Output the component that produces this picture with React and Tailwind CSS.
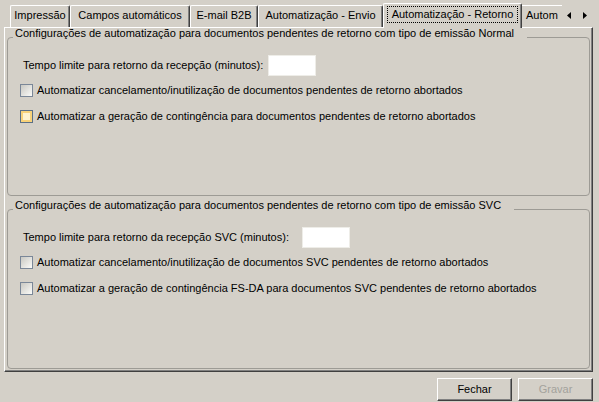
import React from 'react';

const tabs = [
  { id: 'impressao', label: 'Impressão', w: 'w-[60px]' },
  { id: 'campos', label: 'Campos automáticos', w: 'w-[120px]' },
  { id: 'email', label: 'E-mail B2B', w: 'w-[68px]' },
  { id: 'envio', label: 'Automatização - Envio', w: 'w-[125px]' },
];

const Checkbox = ({ hover }) => (
  <div
    className={`w-[13px] h-[13px] shrink-0 border ${
      hover
        ? 'border-[#5b6f86] bg-[#fff3cf] shadow-[inset_0_0_0_2px_#f8d27a]'
        : 'border-[#7a8798] bg-gradient-to-br from-[#c9c8c2] to-[#fbfbf9]'
    }`}
  />
);

const GroupBox = ({ title, className, children }) => (
  <fieldset className={`mx-[2px] border border-[#9d9b95] rounded-[4px] min-w-0 ${className}`}>
    <legend className="ml-[5px] pl-[2px] pr-[13px] pb-[8px] leading-[11px] whitespace-nowrap">
      {title}
    </legend>
    {children}
  </fieldset>
);

const TimeRow = ({ label, labelW }) => (
  <div className="mt-[7px] h-[22px] flex items-center pl-[15px]">
    <span className={`${labelW} whitespace-nowrap`}>{label}</span>
    <div className="w-[48px] h-[21px] bg-white border border-[#eeede8]" />
  </div>
);

const CheckRow = ({ label, hover, first }) => (
  <div className={`${first ? 'mt-[8px]' : 'mt-[13px]'} h-[13px] flex items-center gap-[4px] pl-[12px]`}>
    <Checkbox hover={hover} />
    <span className="whitespace-nowrap leading-[13px]">{label}</span>
  </div>
);

const Button = ({ label, disabled }) => (
  <button
    className={`w-[75px] h-[23px] border border-white border-r-[#404040] border-b-[#404040] shadow-[inset_-1px_-1px_0_#808080] bg-[#d4d0c8] flex items-center justify-center leading-[13px] ${
      disabled ? 'text-[#a3a29c]' : 'text-black'
    }`}
  >
    {label}
  </button>
);

export default function App() {
  return (
    <div className="w-[599px] h-[402px] overflow-hidden bg-[#d4d0c8] font-['Liberation_Sans',Arial,sans-serif] text-[11px] text-black select-none">
      {/* Tab strip */}
      <div className="h-[27px] pt-[3px] pl-[10px] flex items-end">
        {tabs.map((t) => (
          <div
            key={t.id}
            className={`${t.w} h-[22px] shrink-0 flex items-start justify-center pt-[3px] leading-[13px] whitespace-nowrap border-t border-l border-r border-white border-r-[#404040] shadow-[inset_-1px_0_0_#808080] rounded-t-[2px]`}
          >
            {t.label}
          </div>
        ))}
        <div className="relative z-10 -mb-px w-[139px] h-[25px] shrink-0 flex items-start justify-center pt-[2px] bg-[#d4d0c8] border-t border-l border-r border-white border-r-[#404040] shadow-[inset_-1px_0_0_#808080] rounded-t-[2px]">
          <span className="border border-dotted border-black px-[4px] py-[1px] leading-[13px] whitespace-nowrap">
            Automatização - Retorno
          </span>
        </div>
        <div className="w-[40px] h-[22px] shrink-0 flex items-start pt-[3px] pl-[4px] leading-[13px] whitespace-nowrap border-t border-white">
          Autom
        </div>
        <div className="w-[37px] h-[22px] shrink-0 flex items-center pl-[5px] gap-[12px] pb-[1px]">
          <svg width="4" height="7" viewBox="0 0 4 7">
            <polygon points="4,0 4,7 0,3.5" fill="#000" />
          </svg>
          <svg width="4" height="7" viewBox="0 0 4 7">
            <polygon points="0,0 0,7 4,3.5" fill="#000" />
          </svg>
        </div>
      </div>

      {/* Tab panel */}
      <div className="ml-[4px] w-[589px] h-[345px] flex flex-col border border-white border-r-[#404040] border-b-[#404040] shadow-[inset_-1px_-1px_0_#808080]">
        <GroupBox
          className="h-[168px]"
          title="Configurações de automatização para documentos pendentes de retorno com tipo de emissão Normal"
        >
          <TimeRow label="Tempo limite para retorno da recepção (minutos):" labelW="w-[245px]" />
          <CheckRow first label="Automatizar cancelamento/inutilização de documentos pendentes de retorno abortados" />
          <CheckRow hover label="Automatizar a geração de contingência para documentos pendentes de retorno abortados" />
        </GroupBox>

        <GroupBox
          className="mt-[4px] h-[169px]"
          title="Configurações de automatização para documentos pendentes de retorno com tipo de emissão SVC"
        >
          <TimeRow label="Tempo limite para retorno da recepção SVC (minutos):" labelW="w-[279px]" />
          <CheckRow first label="Automatizar cancelamento/inutilização de documentos SVC pendentes de retorno abortados" />
          <CheckRow label="Automatizar a geração de contingência FS-DA para documentos SVC pendentes de retorno abortados" />
        </GroupBox>
      </div>

      {/* Footer buttons */}
      <div className="mt-[6px] pr-[6px] flex justify-end gap-[6px]">
        <Button label="Fechar" />
        <Button label="Gravar" disabled />
      </div>
    </div>
  );
}
